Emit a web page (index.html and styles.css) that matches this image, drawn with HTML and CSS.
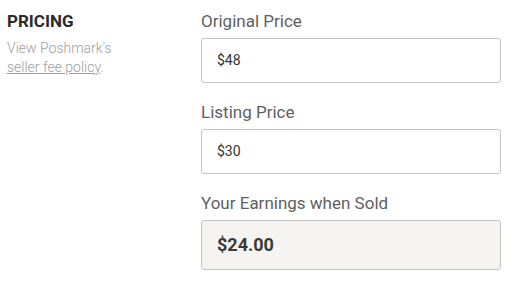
FILE: index.html
```html
<!DOCTYPE html>
<html>
<head>
<meta charset="utf-8">
<link rel="stylesheet" href="styles.css">
</head>
<body>
<div class="section">
  <div class="side">
    <h2 class="title">PRICING</h2>
    <p class="note">View Poshmark's<br><a class="link" href="#">seller fee policy</a>.</p>
  </div>
  <div class="fields">
    <div class="field">
      <label class="label">Original Price</label>
      <div class="input">$48</div>
    </div>
    <div class="field">
      <label class="label">Listing Price</label>
      <div class="input">$30</div>
    </div>
    <div class="field">
      <label class="label">Your Earnings when Sold</label>
      <div class="input input-earn">$24.00</div>
    </div>
  </div>
</div>
</body>
</html>
```
FILE: styles.css
```css
html, body {
  margin: 0;
  padding: 0;
  background: #fff;
}
body {
  font-family: Roboto, "Liberation Sans", sans-serif;
  color: #333;
}
.section {
  display: flex;
  padding: 11px 0 0 7px;
}
.side {
  width: 194px;
  flex: none;
}
.title {
  margin: 0;
  font-size: 17px;
  line-height: 20px;
  font-weight: 700;
  color: #2b2b2b;
}
.note {
  margin: 8px 0 0;
  font-size: 14px;
  line-height: 19px;
  font-weight: 300;
  color: #9e9e9e;
}
.link {
  color: #9e9e9e;
  text-decoration: underline;
}
.fields {
  width: 300px;
  flex: none;
}
.field {
  margin-bottom: 19px;
}
.label {
  display: block;
  font-size: 17px;
  line-height: 20px;
  color: #5f5f5f;
  margin-bottom: 7px;
}
.input {
  border: 1px solid #c4c4c4;
  border-radius: 3px;
  padding: 13px 15px;
  font-size: 14px;
  line-height: 17px;
  color: #333;
  background: #fff;
}
.input-earn {
  background: #f5f4f1;
  font-size: 18px;
  font-weight: 700;
  line-height: 22px;
  color: #3a3a3a;
}
```
